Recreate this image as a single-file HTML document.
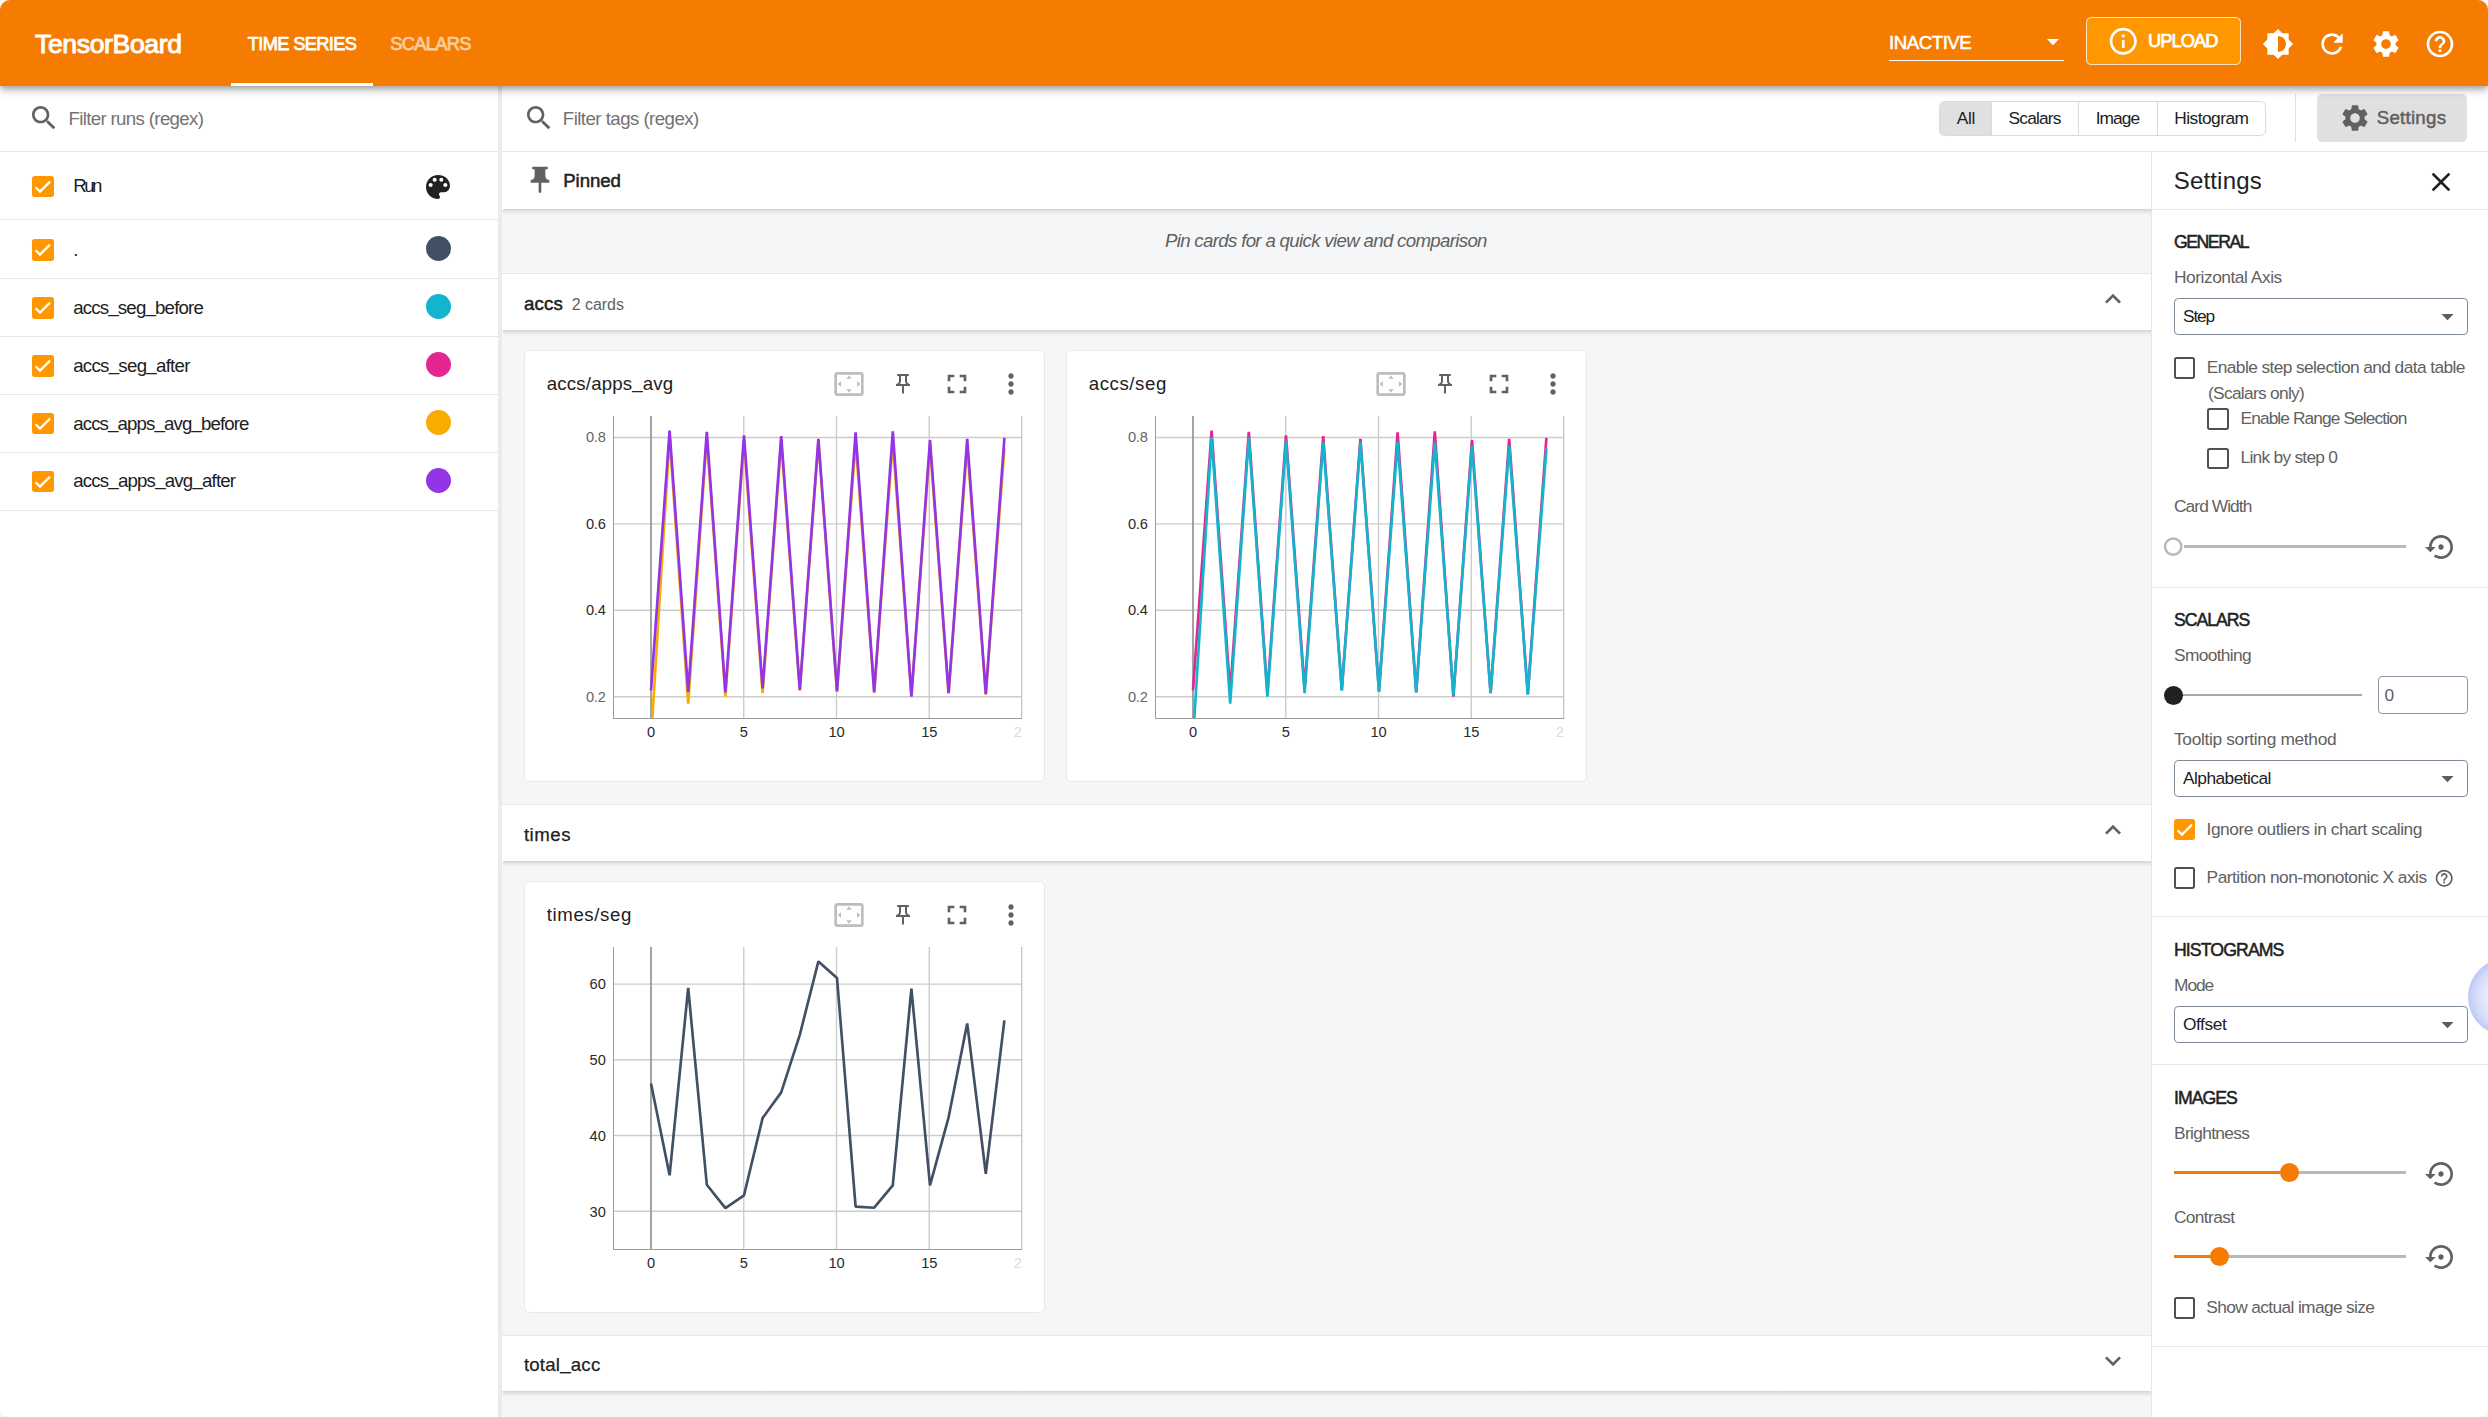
<!DOCTYPE html>
<html lang="en"><head><meta charset="utf-8"><title>TensorBoard</title>
<style>
html,body{margin:0;padding:0;}
body{width:2488px;height:1417px;overflow:hidden;background:#f6f6f7;font-family:"Liberation Sans",Arial,sans-serif;}
#app{position:absolute;left:0;top:0;width:2488px;height:1417px;border-radius:10px;overflow:hidden;background:#fff;}
#app div,#app header,#app aside,#app main,#app section,#app nav{position:absolute;}
.t{position:absolute;white-space:nowrap;line-height:1;display:block;}
.ic{position:absolute;display:block;}
.hline{background:#e4e6e9;height:1px;}
.us{position:relative;top:-2px;}
</style></head><body><div id="app">

<main style="left:502px;top:86px;width:1649px;height:1331px;background:#f5f6f7;">
</main>
<div class="gh" style="left:502.00px;top:152.00px;width:1649.00px;height:57.00px;background:#fff;box-sizing:border-box;"></div>
<div style="left:503.00px;top:209.00px;width:1648.00px;height:6.00px;background:linear-gradient(to bottom, rgba(0,0,0,0.15), rgba(0,0,0,0.06) 45%, rgba(0,0,0,0) 100%);"></div>
<svg class="ic" style="left:524.20px;top:164.10px;" width="32.00" height="32.00" viewBox="0 0 24 24"><path fill="#616161" d="M16 9V4h1c.55 0 1-.45 1-1s-.45-1-1-1H7c-.55 0-1 .45-1 1s.45 1 1 1h1v5c0 1.66-1.34 3-3 3v2h5.970v7l1 1 1-1v-7H19v-2c-1.660 0-3-1.340-3-3z"/></svg>
<span class="t" style="left:563.30px;top:172px;font-size:18.67px;color:#212121;letter-spacing:-0.120px;-webkit-text-stroke:0.5px;">Pinned</span>
<span class="t" style="left:1164.90px;top:232px;font-size:18.67px;color:#616161;letter-spacing:-0.671px;font-style:italic;">Pin cards for a quick view and comparison</span>
<div class="gh" style="left:502.00px;top:273.00px;width:1649.00px;height:57.00px;background:#fff;box-sizing:border-box;border-top:1px solid #e6e8eb;"></div>
<div style="left:503.00px;top:330.00px;width:1648.00px;height:6.00px;background:linear-gradient(to bottom, rgba(0,0,0,0.15), rgba(0,0,0,0.06) 45%, rgba(0,0,0,0) 100%);"></div>
<span class="t" style="left:523.90px;top:295px;font-size:18.67px;color:#212121;letter-spacing:0.209px;-webkit-text-stroke:0.5px;">accs</span>
<span class="t" style="left:571.70px;top:297px;font-size:16.00px;color:#616161;letter-spacing:-0.027px;">2 cards</span>
<svg class="ic" style="left:2097.30px;top:282.70px;" width="32.00" height="32.00" viewBox="0 0 24 24"><path fill="#616161" d="M12 8l-6 6 1.41 1.41L12 10.83l4.59 4.58L18 14z"/></svg>
<div class="gh" style="left:502.00px;top:804.30px;width:1649.00px;height:57.00px;background:#fff;box-sizing:border-box;border-top:1px solid #e6e8eb;"></div>
<div style="left:503.00px;top:861.30px;width:1648.00px;height:6.00px;background:linear-gradient(to bottom, rgba(0,0,0,0.15), rgba(0,0,0,0.06) 45%, rgba(0,0,0,0) 100%);"></div>
<span class="t" style="left:523.90px;top:826px;font-size:18.67px;color:#212121;letter-spacing:0.506px;-webkit-text-stroke:0.25px;">times</span>
<svg class="ic" style="left:2097.30px;top:814.00px;" width="32.00" height="32.00" viewBox="0 0 24 24"><path fill="#616161" d="M12 8l-6 6 1.41 1.41L12 10.83l4.59 4.58L18 14z"/></svg>
<div class="gh" style="left:502.00px;top:1335.00px;width:1649.00px;height:56.00px;background:#fff;box-sizing:border-box;border-top:1px solid #e6e8eb;"></div>
<div style="left:503.00px;top:1391.00px;width:1648.00px;height:6.00px;background:linear-gradient(to bottom, rgba(0,0,0,0.15), rgba(0,0,0,0.06) 45%, rgba(0,0,0,0) 100%);"></div>
<span class="t" style="left:523.90px;top:1356px;font-size:18.67px;color:#212121;letter-spacing:0.205px;-webkit-text-stroke:0.25px;">total<span class="us">_</span>acc</span>
<svg class="ic" style="left:2097.30px;top:1344.70px;" width="32.00" height="32.00" viewBox="0 0 24 24"><path fill="#616161" d="M16.59 8.59L12 13.17 7.41 8.59 6 10l6 6 6-6z"/></svg>
<div class="card" style="left:524.00px;top:350.00px;width:521.00px;height:432.00px;background:#fff;border:1px solid #e8e9eb;border-radius:5.3px;box-sizing:border-box;"></div>
<span class="t" style="left:546.80px;top:375px;font-size:18.67px;color:#212121;letter-spacing:0.161px;">accs/apps<span class="us">_</span>avg</span>
<svg class="ic" style="left:833.20px;top:368.40px;" width="32.00" height="32.00" viewBox="0 0 24 24"><path fill="#bdbdbd" d="M12.01 5.5L10 8h4l-1.990-2.500zM18 10v4l2.500-1.990L18 10zM6 10l-2.500 2.010L6 14v-4zm8 6h-4l2.010 2.500L14 16zm7-13H3c-1.100 0-2 .900-2 2v14c0 1.100.900 2 2 2h18c1.100 0 2-.900 2-2V5c0-1.100-.900-2-2-2zm0 16.010H3V4.990h18v14.020z"/></svg>
<svg class="ic" style="left:891.20px;top:372.40px;" width="24.00" height="24.00" viewBox="0 0 24 24"><path fill="#616161" d="M14 4v5c0 1.120.370 2.160 1 3H9c.650-.860 1-1.900 1-3V4h4m3-2H7c-.550 0-1 .450-1 1s.450 1 1 1h1v5c0 1.660-1.340 3-3 3v2h5.970v7l1 1 1-1v-7H19v-2c-1.660 0-3-1.340-3-3V4h1c.550 0 1-.450 1-1s-.450-1-1-1z"/></svg>
<svg class="ic" style="left:941.40px;top:368.40px;" width="32.00" height="32.00" viewBox="0 0 24 24"><path fill="#616161" d="M7 14H5v5h5v-2H7v-3zm-2-4h2V7h3V5H5v5zm12 7h-3v2h5v-5h-2v3zM14 5v2h3v3h2V5h-5z"/></svg>
<svg class="ic" style="left:995.20px;top:368.40px;" width="32.00" height="32.00" viewBox="0 0 24 24"><path fill="#616161" d="M12 8c1.1 0 2-.9 2-2s-.9-2-2-2-2 .9-2 2 .9 2 2 2zm0 2c-1.1 0-2 .9-2 2s.9 2 2 2 2-.9 2-2-.9-2-2-2zm0 6c-1.1 0-2 .9-2 2s.9 2 2 2 2-.9 2-2-.9-2-2-2z"/></svg>
<svg class="ic" style="left:524.00px;top:350.00px" width="521" height="431" viewBox="524.00 350.00 521 431"><line x1="743.76" x2="743.76" y1="416.00" y2="718.40" stroke="#cccccc" stroke-width="1.4"/><line x1="836.53" x2="836.53" y1="416.00" y2="718.40" stroke="#cccccc" stroke-width="1.4"/><line x1="929.30" x2="929.30" y1="416.00" y2="718.40" stroke="#cccccc" stroke-width="1.4"/><line x1="613.50" x2="1021.70" y1="437.50" y2="437.50" stroke="#cccccc" stroke-width="1.4"/><line x1="613.50" x2="1021.70" y1="523.90" y2="523.90" stroke="#cccccc" stroke-width="1.4"/><line x1="613.50" x2="1021.70" y1="610.30" y2="610.30" stroke="#cccccc" stroke-width="1.4"/><line x1="613.50" x2="1021.70" y1="696.70" y2="696.70" stroke="#cccccc" stroke-width="1.4"/><line x1="1021.70" x2="1021.70" y1="416.00" y2="718.40" stroke="#c4c4c4" stroke-width="1.3"/><line x1="651.00" x2="651.00" y1="416.00" y2="718.40" stroke="#999999" stroke-width="1.8"/><clipPath id="cp524_350"><rect x="613.50" y="416.00" width="408.20" height="302.40"/></clipPath><g clip-path="url(#cp524_350)" fill="none" stroke-width="2.67" stroke-linejoin="bevel"><polyline stroke="#f9ab00" points="651.00,739.90 669.60,437.50 688.20,703.61 706.80,437.50 725.40,696.70 744.00,440.96 762.60,693.24 781.20,441.82 799.80,690.65 818.40,441.82 837.00,691.95 855.60,441.82 874.20,692.38 892.80,441.82 911.40,694.97 930.00,446.14 948.60,693.24 967.20,446.14 985.80,694.54 1004.40,448.30"/><polyline stroke="#9334e6" points="651.00,690.39 669.60,430.59 688.20,691.95 706.80,431.88 725.40,692.38 744.00,435.34 762.60,688.49 781.20,436.20 799.80,689.79 818.40,438.80 837.00,691.08 855.60,432.32 874.20,692.38 892.80,431.45 911.40,696.70 930.00,440.09 948.60,693.24 967.20,438.80 985.80,694.11 1004.40,437.93"/></g><line x1="613.50" x2="613.50" y1="416.00" y2="719.00" stroke="#9c9c9c" stroke-width="1" shape-rendering="crispEdges"/><line x1="613.00" x2="1022.30" y1="718.50" y2="718.50" stroke="#9c9c9c" stroke-width="1" shape-rendering="crispEdges"/></svg>
<span class="t" style="left:646.90px;top:725px;font-size:14.67px;color:#2a2a2a;">0</span>
<span class="t" style="left:739.66px;top:725px;font-size:14.67px;color:#2a2a2a;">5</span>
<span class="t" style="left:828.38px;top:725px;font-size:14.67px;color:#2a2a2a;letter-spacing:-0.008px;">10</span>
<span class="t" style="left:921.15px;top:725px;font-size:14.67px;color:#2a2a2a;letter-spacing:-0.008px;">15</span>
<span class="t" style="left:1013.70px;top:725px;font-size:14.67px;color:#dcdcdc;">2</span>
<span class="t" style="left:585.90px;top:430px;font-size:14.67px;color:#666666;letter-spacing:-0.186px;">0.8</span>
<span class="t" style="left:585.90px;top:517px;font-size:14.67px;color:#2a2a2a;letter-spacing:-0.186px;">0.6</span>
<span class="t" style="left:585.90px;top:603px;font-size:14.67px;color:#2a2a2a;letter-spacing:-0.186px;">0.4</span>
<span class="t" style="left:585.90px;top:690px;font-size:14.67px;color:#666666;letter-spacing:-0.186px;">0.2</span>
<div class="card" style="left:1066.00px;top:350.00px;width:521.00px;height:432.00px;background:#fff;border:1px solid #e8e9eb;border-radius:5.3px;box-sizing:border-box;"></div>
<span class="t" style="left:1088.80px;top:375px;font-size:18.67px;color:#212121;letter-spacing:0.554px;">accs/seg</span>
<svg class="ic" style="left:1375.20px;top:368.40px;" width="32.00" height="32.00" viewBox="0 0 24 24"><path fill="#bdbdbd" d="M12.01 5.5L10 8h4l-1.990-2.500zM18 10v4l2.500-1.990L18 10zM6 10l-2.500 2.010L6 14v-4zm8 6h-4l2.010 2.500L14 16zm7-13H3c-1.100 0-2 .900-2 2v14c0 1.100.900 2 2 2h18c1.100 0 2-.900 2-2V5c0-1.100-.900-2-2-2zm0 16.010H3V4.990h18v14.020z"/></svg>
<svg class="ic" style="left:1433.20px;top:372.40px;" width="24.00" height="24.00" viewBox="0 0 24 24"><path fill="#616161" d="M14 4v5c0 1.120.370 2.160 1 3H9c.650-.860 1-1.900 1-3V4h4m3-2H7c-.550 0-1 .450-1 1s.450 1 1 1h1v5c0 1.660-1.340 3-3 3v2h5.970v7l1 1 1-1v-7H19v-2c-1.660 0-3-1.340-3-3V4h1c.550 0 1-.450 1-1s-.450-1-1-1z"/></svg>
<svg class="ic" style="left:1483.40px;top:368.40px;" width="32.00" height="32.00" viewBox="0 0 24 24"><path fill="#616161" d="M7 14H5v5h5v-2H7v-3zm-2-4h2V7h3V5H5v5zm12 7h-3v2h5v-5h-2v3zM14 5v2h3v3h2V5h-5z"/></svg>
<svg class="ic" style="left:1537.20px;top:368.40px;" width="32.00" height="32.00" viewBox="0 0 24 24"><path fill="#616161" d="M12 8c1.1 0 2-.9 2-2s-.9-2-2-2-2 .9-2 2 .9 2 2 2zm0 2c-1.1 0-2 .9-2 2s.9 2 2 2 2-.9 2-2-.9-2-2-2zm0 6c-1.1 0-2 .9-2 2s.9 2 2 2 2-.9 2-2-.9-2-2-2z"/></svg>
<svg class="ic" style="left:1066.00px;top:350.00px" width="521" height="431" viewBox="1066.00 350.00 521 431"><line x1="1285.77" x2="1285.77" y1="416.00" y2="718.40" stroke="#cccccc" stroke-width="1.4"/><line x1="1378.53" x2="1378.53" y1="416.00" y2="718.40" stroke="#cccccc" stroke-width="1.4"/><line x1="1471.30" x2="1471.30" y1="416.00" y2="718.40" stroke="#cccccc" stroke-width="1.4"/><line x1="1155.50" x2="1563.70" y1="437.50" y2="437.50" stroke="#cccccc" stroke-width="1.4"/><line x1="1155.50" x2="1563.70" y1="523.90" y2="523.90" stroke="#cccccc" stroke-width="1.4"/><line x1="1155.50" x2="1563.70" y1="610.30" y2="610.30" stroke="#cccccc" stroke-width="1.4"/><line x1="1155.50" x2="1563.70" y1="696.70" y2="696.70" stroke="#cccccc" stroke-width="1.4"/><line x1="1563.70" x2="1563.70" y1="416.00" y2="718.40" stroke="#c4c4c4" stroke-width="1.3"/><line x1="1193.00" x2="1193.00" y1="416.00" y2="718.40" stroke="#999999" stroke-width="1.8"/><clipPath id="cp1066_350"><rect x="1155.50" y="416.00" width="408.20" height="302.40"/></clipPath><g clip-path="url(#cp1066_350)" fill="none" stroke-width="2.67" stroke-linejoin="bevel"><polyline stroke="#e52592" points="1193.00,690.39 1211.60,430.59 1230.20,691.95 1248.80,431.88 1267.40,692.38 1286.00,435.34 1304.60,688.49 1323.20,436.20 1341.80,689.79 1360.40,438.80 1379.00,691.08 1397.60,432.32 1416.20,692.38 1434.80,431.45 1453.40,696.70 1472.00,440.09 1490.60,693.24 1509.20,438.80 1527.80,694.11 1546.40,437.93"/><polyline stroke="#12b5cb" points="1193.00,739.90 1211.60,437.50 1230.20,703.61 1248.80,437.50 1267.40,696.70 1286.00,440.96 1304.60,693.24 1323.20,441.82 1341.80,690.65 1360.40,441.82 1379.00,691.95 1397.60,441.82 1416.20,692.38 1434.80,441.82 1453.40,694.97 1472.00,446.14 1490.60,693.24 1509.20,446.14 1527.80,694.54 1546.40,448.30"/></g><line x1="1155.50" x2="1155.50" y1="416.00" y2="719.00" stroke="#9c9c9c" stroke-width="1" shape-rendering="crispEdges"/><line x1="1155.00" x2="1564.30" y1="718.50" y2="718.50" stroke="#9c9c9c" stroke-width="1" shape-rendering="crispEdges"/></svg>
<span class="t" style="left:1188.90px;top:725px;font-size:14.67px;color:#2a2a2a;">0</span>
<span class="t" style="left:1281.67px;top:725px;font-size:14.67px;color:#2a2a2a;">5</span>
<span class="t" style="left:1370.38px;top:725px;font-size:14.67px;color:#2a2a2a;letter-spacing:-0.008px;">10</span>
<span class="t" style="left:1463.14px;top:725px;font-size:14.67px;color:#2a2a2a;letter-spacing:-0.008px;">15</span>
<span class="t" style="left:1555.70px;top:725px;font-size:14.67px;color:#dcdcdc;">2</span>
<span class="t" style="left:1127.90px;top:430px;font-size:14.67px;color:#666666;letter-spacing:-0.186px;">0.8</span>
<span class="t" style="left:1127.90px;top:517px;font-size:14.67px;color:#2a2a2a;letter-spacing:-0.186px;">0.6</span>
<span class="t" style="left:1127.90px;top:603px;font-size:14.67px;color:#2a2a2a;letter-spacing:-0.186px;">0.4</span>
<span class="t" style="left:1127.90px;top:690px;font-size:14.67px;color:#666666;letter-spacing:-0.186px;">0.2</span>
<div class="card" style="left:524.00px;top:881.00px;width:521.00px;height:432.00px;background:#fff;border:1px solid #e8e9eb;border-radius:5.3px;box-sizing:border-box;"></div>
<span class="t" style="left:546.80px;top:906px;font-size:18.67px;color:#212121;letter-spacing:0.583px;">times/seg</span>
<svg class="ic" style="left:833.20px;top:899.40px;" width="32.00" height="32.00" viewBox="0 0 24 24"><path fill="#bdbdbd" d="M12.01 5.5L10 8h4l-1.990-2.500zM18 10v4l2.500-1.990L18 10zM6 10l-2.500 2.010L6 14v-4zm8 6h-4l2.010 2.500L14 16zm7-13H3c-1.100 0-2 .900-2 2v14c0 1.100.900 2 2 2h18c1.100 0 2-.900 2-2V5c0-1.100-.900-2-2-2zm0 16.010H3V4.990h18v14.020z"/></svg>
<svg class="ic" style="left:891.20px;top:903.40px;" width="24.00" height="24.00" viewBox="0 0 24 24"><path fill="#616161" d="M14 4v5c0 1.120.370 2.160 1 3H9c.650-.860 1-1.900 1-3V4h4m3-2H7c-.550 0-1 .450-1 1s.450 1 1 1h1v5c0 1.660-1.340 3-3 3v2h5.970v7l1 1 1-1v-7H19v-2c-1.660 0-3-1.340-3-3V4h1c.550 0 1-.450 1-1s-.450-1-1-1z"/></svg>
<svg class="ic" style="left:941.40px;top:899.40px;" width="32.00" height="32.00" viewBox="0 0 24 24"><path fill="#616161" d="M7 14H5v5h5v-2H7v-3zm-2-4h2V7h3V5H5v5zm12 7h-3v2h5v-5h-2v3zM14 5v2h3v3h2V5h-5z"/></svg>
<svg class="ic" style="left:995.20px;top:899.40px;" width="32.00" height="32.00" viewBox="0 0 24 24"><path fill="#616161" d="M12 8c1.1 0 2-.9 2-2s-.9-2-2-2-2 .9-2 2 .9 2 2 2zm0 2c-1.1 0-2 .9-2 2s.9 2 2 2 2-.9 2-2-.9-2-2-2zm0 6c-1.1 0-2 .9-2 2s.9 2 2 2 2-.9 2-2-.9-2-2-2z"/></svg>
<svg class="ic" style="left:524.00px;top:881.40px" width="521" height="431" viewBox="524.00 881.40 521 431"><line x1="743.76" x2="743.76" y1="947.40" y2="1249.80" stroke="#cccccc" stroke-width="1.4"/><line x1="836.53" x2="836.53" y1="947.40" y2="1249.80" stroke="#cccccc" stroke-width="1.4"/><line x1="929.30" x2="929.30" y1="947.40" y2="1249.80" stroke="#cccccc" stroke-width="1.4"/><line x1="613.50" x2="1021.70" y1="984.50" y2="984.50" stroke="#cccccc" stroke-width="1.4"/><line x1="613.50" x2="1021.70" y1="1060.20" y2="1060.20" stroke="#cccccc" stroke-width="1.4"/><line x1="613.50" x2="1021.70" y1="1135.90" y2="1135.90" stroke="#cccccc" stroke-width="1.4"/><line x1="613.50" x2="1021.70" y1="1211.60" y2="1211.60" stroke="#cccccc" stroke-width="1.4"/><line x1="1021.70" x2="1021.70" y1="947.40" y2="1249.80" stroke="#c4c4c4" stroke-width="1.3"/><line x1="651.00" x2="651.00" y1="947.40" y2="1249.80" stroke="#999999" stroke-width="1.8"/><clipPath id="cp524_881"><rect x="613.50" y="947.40" width="408.20" height="302.40"/></clipPath><g clip-path="url(#cp524_881)" fill="none" stroke-width="2.67" stroke-linejoin="bevel"><polyline stroke="#425066" points="651.00,1083.89 669.60,1175.72 688.20,988.28 706.80,1185.11 725.40,1208.57 744.00,1195.70 762.60,1118.49 781.20,1092.75 799.80,1035.22 818.40,961.79 837.00,978.44 855.60,1207.06 874.20,1208.12 892.80,1185.86 911.40,989.04 930.00,1185.86 948.60,1117.73 967.20,1023.86 985.80,1174.13 1004.40,1020.84"/></g><line x1="613.50" x2="613.50" y1="947.40" y2="1250.00" stroke="#9c9c9c" stroke-width="1" shape-rendering="crispEdges"/><line x1="613.00" x2="1022.30" y1="1249.50" y2="1249.50" stroke="#9c9c9c" stroke-width="1" shape-rendering="crispEdges"/></svg>
<span class="t" style="left:646.90px;top:1256px;font-size:14.67px;color:#2a2a2a;">0</span>
<span class="t" style="left:739.66px;top:1256px;font-size:14.67px;color:#2a2a2a;">5</span>
<span class="t" style="left:828.38px;top:1256px;font-size:14.67px;color:#2a2a2a;letter-spacing:-0.008px;">10</span>
<span class="t" style="left:921.15px;top:1256px;font-size:14.67px;color:#2a2a2a;letter-spacing:-0.008px;">15</span>
<span class="t" style="left:1013.70px;top:1256px;font-size:14.67px;color:#dcdcdc;">2</span>
<span class="t" style="left:589.60px;top:977px;font-size:14.67px;color:#2a2a2a;letter-spacing:-0.008px;">60</span>
<span class="t" style="left:589.60px;top:1053px;font-size:14.67px;color:#2a2a2a;letter-spacing:-0.008px;">50</span>
<span class="t" style="left:589.60px;top:1129px;font-size:14.67px;color:#2a2a2a;letter-spacing:-0.008px;">40</span>
<span class="t" style="left:589.60px;top:1205px;font-size:14.67px;color:#2a2a2a;letter-spacing:-0.008px;">30</span>
<div style="left:502.00px;top:86.00px;width:1986.00px;height:65.00px;background:#fff;border-bottom:1px solid #e4e6e9;"></div>
<svg class="ic" style="left:523.30px;top:101.70px;" width="32.00" height="32.00" viewBox="0 0 24 24"><path fill="#616161" d="M15.5 14h-.79l-.28-.27C15.41 12.59 16 11.11 16 9.5 16 5.91 13.09 3 9.5 3S3 5.91 3 9.5 5.91 16 9.5 16c1.61 0 3.09-.59 4.23-1.57l.27.28v.79l5 4.99L20.49 19l-4.99-5zm-6 0C7.01 14 5 11.99 5 9.5S7.01 5 9.5 5 14 7.01 14 9.5 11.99 14 9.5 14z"/></svg>
<span class="t" style="left:562.80px;top:110px;font-size:18.67px;color:#737373;letter-spacing:-0.539px;">Filter tags (regex)</span>
<div style="left:1939.00px;top:101.30px;width:327.00px;height:34.60px;border:1px solid #dadada;border-radius:5.3px;box-sizing:border-box;background:#fff;overflow:hidden;"><div style="left:0;top:0;width:51.2px;height:100%;background:#e0e0e0;"></div><div style="left:137.9px;top:0;width:1px;height:100%;background:#dadada;"></div><div style="left:216.9px;top:0;width:1px;height:100%;background:#dadada;"></div><div style="left:51.2px;top:0;width:1px;height:100%;background:#dadada;"></div></div>
<span class="t" style="left:1956.70px;top:110px;font-size:17.33px;color:#212121;letter-spacing:-0.330px;">All</span>
<span class="t" style="left:2008.50px;top:110px;font-size:17.33px;color:#212121;letter-spacing:-0.798px;">Scalars</span>
<span class="t" style="left:2095.70px;top:110px;font-size:17.33px;color:#212121;letter-spacing:-0.917px;">Image</span>
<span class="t" style="left:2174.20px;top:110px;font-size:17.33px;color:#212121;letter-spacing:-0.522px;">Histogram</span>
<div style="left:2295.00px;top:94.00px;width:1.00px;height:47.50px;background:#e0e0e0;"></div>
<div style="left:2317.20px;top:94.20px;width:149.80px;height:47.80px;background:#e0e0e0;border-radius:5.3px;"></div>
<svg class="ic" style="left:2339.20px;top:102.20px;" width="32.00" height="32.00" viewBox="0 0 24 24"><path fill="#616161" d="M19.14 12.94c.04-.3.06-.61.06-.94 0-.32-.02-.64-.07-.94l2.03-1.58c.18-.14.23-.41.12-.61l-1.92-3.32c-.12-.22-.37-.29-.59-.22l-2.39.96c-.5-.38-1.03-.7-1.62-.94l-.36-2.54c-.04-.24-.24-.41-.48-.41h-3.84c-.24 0-.43.17-.47.41l-.36 2.54c-.59.24-1.13.57-1.62.94l-2.39-.96c-.22-.08-.47 0-.59.22L2.74 8.87c-.12.21-.08.47.12.61l2.03 1.58c-.05.3-.09.63-.09.94s.02.64.07.94l-2.03 1.58c-.18.14-.23.41-.12.61l1.92 3.32c.12.22.37.29.59.22l2.39-.96c.5.38 1.03.7 1.62.94l.36 2.54c.05.24.24.41.48.41h3.84c.24 0 .44-.17.47-.41l.36-2.54c.59-.24 1.13-.56 1.62-.94l2.39.96c.22.08.47 0 .59-.22l1.92-3.32c.12-.22.07-.47-.12-.61l-2.01-1.58zM12 15.6c-1.98 0-3.6-1.62-3.6-3.6s1.62-3.6 3.6-3.6 3.6 1.62 3.6 3.6-1.62 3.6-3.6 3.6z"/></svg>
<span class="t" style="left:2376.70px;top:109px;font-size:18.67px;color:#616161;letter-spacing:0.269px;-webkit-text-stroke:0.5px;">Settings</span>
<div style="left:2151.00px;top:152.00px;width:337.00px;height:1265.00px;background:#fff;border-left:1px solid #e4e6e9;"></div>
<span class="t" style="left:2173.70px;top:169px;font-size:24.00px;color:#212121;letter-spacing:0.184px;">Settings</span>
<svg class="ic" style="left:2425.40px;top:165.70px;" width="32.00" height="32.00" viewBox="0 0 24 24"><path fill="#212121" d="M19 6.41L17.59 5 12 10.59 6.41 5 5 6.41 10.59 12 5 17.59 6.41 19 12 13.41 17.59 19 19 17.59 13.41 12z"/></svg>
<div class="hline" style="left:2152.00px;top:209.00px;width:336.00px;height:1.00px;"></div>
<span class="t" style="left:2174.00px;top:234px;font-size:17.70px;color:#212121;letter-spacing:-1.490px;-webkit-text-stroke:0.5px;">GENERAL</span>
<span class="t" style="left:2174.00px;top:269px;font-size:17.33px;color:#616161;letter-spacing:-0.458px;">Horizontal Axis</span>
<div style="left:2174.20px;top:298.00px;width:293.60px;height:37.00px;border:1.2px solid #7f8a99;border-radius:4.2px;box-sizing:border-box;background:#fff;"></div>
<span class="t" style="left:2183.00px;top:308px;font-size:17.33px;color:#212121;letter-spacing:-1.151px;">Step</span>
<svg class="ic" style="left:2432.70px;top:301.70px;" width="29.00" height="29.00" viewBox="0 0 24 24"><path fill="#5c5c5c" d="M7 10l5 5 5-5z"/></svg>
<div class="abs" style="left:2174.10px;top:357.20px;width:21.33px;height:21.33px;box-sizing:border-box;border:2px solid #505050;border-radius:2.7px;"></div>
<span class="t" style="left:2206.80px;top:359px;font-size:17.33px;color:#616161;letter-spacing:-0.594px;">Enable step selection and data table</span>
<span class="t" style="left:2208.00px;top:385px;font-size:17.33px;color:#616161;letter-spacing:-0.703px;">(Scalars only)</span>
<div class="abs" style="left:2207.30px;top:408.40px;width:21.33px;height:21.33px;box-sizing:border-box;border:2px solid #505050;border-radius:2.7px;"></div>
<span class="t" style="left:2240.50px;top:410px;font-size:17.33px;color:#616161;letter-spacing:-0.902px;">Enable Range Selection</span>
<div class="abs" style="left:2207.30px;top:448.00px;width:21.33px;height:21.33px;box-sizing:border-box;border:2px solid #505050;border-radius:2.7px;"></div>
<span class="t" style="left:2240.50px;top:449px;font-size:17.33px;color:#616161;letter-spacing:-0.724px;">Link by step 0</span>
<span class="t" style="left:2174.00px;top:498px;font-size:17.33px;color:#616161;letter-spacing:-0.929px;">Card Width</span>
<div style="left:2184.00px;top:545.00px;width:222.00px;height:3.00px;background:#b8b8b8;"></div>
<svg class="ic" style="left:2163px;top:536px" width="21" height="21" viewBox="2163 536 21 21"><circle cx="2173.2" cy="546.6" r="8.2" fill="#fff" stroke="#b8b8b8" stroke-width="2.5"/></svg>
<svg class="ic" style="left:2424.90px;top:531.00px;" width="32.00" height="32.00" viewBox="0 0 24 24"><path fill="#616161" d="M14 12c0-1.1-.9-2-2-2s-2 .9-2 2 .9 2 2 2 2-.9 2-2zm-2-9c-4.97 0-9 4.03-9 9H0l4 4 4-4H5c0-3.870 3.130-7 7-7s7 3.130 7 7-3.130 7-7 7c-1.510 0-2.910-.490-4.060-1.300l-1.420 1.440C8.040 20.300 9.940 21 12 21c4.970 0 9-4.030 9-9s-4.030-9-9-9z"/></svg>
<div class="hline" style="left:2152.00px;top:587.00px;width:336.00px;height:1.00px;"></div>
<span class="t" style="left:2174.00px;top:612px;font-size:17.70px;color:#212121;letter-spacing:-1.048px;-webkit-text-stroke:0.5px;">SCALARS</span>
<span class="t" style="left:2174.00px;top:647px;font-size:17.33px;color:#616161;letter-spacing:-0.643px;">Smoothing</span>
<div style="left:2180.00px;top:693.80px;width:182.00px;height:2.20px;background:#a8a8a8;"></div>
<div style="left:2163.90px;top:686.00px;width:19.00px;height:19.00px;border-radius:50%;background:#212121;"></div>
<div style="left:2378.00px;top:676.00px;width:90.00px;height:38.00px;border:1px solid #8a94a6;border-radius:4px;box-sizing:border-box;background:#fff;"></div>
<span class="t" style="left:2384.60px;top:687px;font-size:17.33px;color:#616161;">0</span>
<span class="t" style="left:2174.00px;top:731px;font-size:17.33px;color:#616161;letter-spacing:-0.330px;">Tooltip sorting method</span>
<div style="left:2174.20px;top:760.00px;width:293.60px;height:37.00px;border:1.2px solid #7f8a99;border-radius:4.2px;box-sizing:border-box;background:#fff;"></div>
<span class="t" style="left:2183.00px;top:770px;font-size:17.33px;color:#212121;letter-spacing:-0.547px;">Alphabetical</span>
<svg class="ic" style="left:2432.70px;top:763.70px;" width="29.00" height="29.00" viewBox="0 0 24 24"><path fill="#5c5c5c" d="M7 10l5 5 5-5z"/></svg>
<div class="abs" style="left:2174.00px;top:819.00px;width:21.33px;height:21.33px;background:#ff9800;border-radius:2.7px;"><svg viewBox="0 0 24 24" width="100%" height="100%"><path fill="none" stroke="#fff" stroke-width="2.5" d="M4.1 12.7 9 17.6 20.3 6.3"/></svg></div>
<span class="t" style="left:2206.60px;top:821px;font-size:17.33px;color:#616161;letter-spacing:-0.465px;">Ignore outliers in chart scaling</span>
<div class="abs" style="left:2174.10px;top:867.20px;width:21.33px;height:21.33px;box-sizing:border-box;border:2px solid #505050;border-radius:2.7px;"></div>
<span class="t" style="left:2206.60px;top:869px;font-size:17.33px;color:#616161;letter-spacing:-0.501px;">Partition non-monotonic X axis</span>
<svg class="ic" style="left:2433.90px;top:867.80px;" width="20.40" height="20.40" viewBox="0 0 24 24"><path fill="#616161" d="M11 18h2v-2h-2v2zm1-16C6.48 2 2 6.48 2 12s4.48 10 10 10 10-4.48 10-10S17.52 2 12 2zm0 18c-4.41 0-8-3.59-8-8s3.59-8 8-8 8 3.59 8 8-3.59 8-8 8zm0-14c-2.21 0-4 1.79-4 4h2c0-1.1.9-2 2-2s2 .9 2 2c0 2-3 1.75-3 5h2c0-2.25 3-2.5 3-5 0-2.21-1.79-4-4-4z"/></svg>
<div class="hline" style="left:2152.00px;top:916.00px;width:336.00px;height:1.00px;"></div>
<span class="t" style="left:2174.00px;top:942px;font-size:17.70px;color:#212121;letter-spacing:-0.911px;-webkit-text-stroke:0.5px;">HISTOGRAMS</span>
<span class="t" style="left:2174.00px;top:977px;font-size:17.33px;color:#616161;letter-spacing:-1.050px;">Mode</span>
<div style="left:2174.20px;top:1006.00px;width:293.60px;height:37.00px;border:1.2px solid #7f8a99;border-radius:4.2px;box-sizing:border-box;background:#fff;"></div>
<span class="t" style="left:2183.00px;top:1016px;font-size:17.33px;color:#212121;letter-spacing:-0.443px;">Offset</span>
<svg class="ic" style="left:2432.70px;top:1009.70px;" width="29.00" height="29.00" viewBox="0 0 24 24"><path fill="#5c5c5c" d="M7 10l5 5 5-5z"/></svg>
<div class="hline" style="left:2152.00px;top:1064.00px;width:336.00px;height:1.00px;"></div>
<div style="left:2468.00px;top:957.50px;width:78.00px;height:78.00px;border-radius:50%;background:radial-gradient(circle closest-side, #eef1fd 0%, #e6eafc 55%, #d5dcfa 80%, #bcc8f8 100%);"></div>
<span class="t" style="left:2174.00px;top:1090px;font-size:17.70px;color:#212121;letter-spacing:-0.984px;-webkit-text-stroke:0.5px;">IMAGES</span>
<span class="t" style="left:2174.00px;top:1125px;font-size:17.33px;color:#616161;letter-spacing:-0.665px;">Brightness</span>
<div style="left:2174.00px;top:1170.90px;width:232.00px;height:3.20px;background:#b8b8b8;"></div>
<div style="left:2174.00px;top:1170.90px;width:115.40px;height:3.20px;background:#f57c00;"></div>
<div style="left:2279.90px;top:1163.00px;width:19.00px;height:19.00px;border-radius:50%;background:#f57c00;"></div>
<svg class="ic" style="left:2424.90px;top:1158.20px;" width="32.00" height="32.00" viewBox="0 0 24 24"><path fill="#616161" d="M14 12c0-1.1-.9-2-2-2s-2 .9-2 2 .9 2 2 2 2-.9 2-2zm-2-9c-4.97 0-9 4.03-9 9H0l4 4 4-4H5c0-3.870 3.130-7 7-7s7 3.130 7 7-3.130 7-7 7c-1.510 0-2.910-.490-4.060-1.300l-1.420 1.440C8.040 20.300 9.940 21 12 21c4.970 0 9-4.030 9-9s-4.030-9-9-9z"/></svg>
<span class="t" style="left:2174.00px;top:1209px;font-size:17.33px;color:#616161;letter-spacing:-0.642px;">Contrast</span>
<div style="left:2174.00px;top:1254.90px;width:232.00px;height:3.20px;background:#b8b8b8;"></div>
<div style="left:2174.00px;top:1254.90px;width:45.70px;height:3.20px;background:#f57c00;"></div>
<div style="left:2210.20px;top:1247.00px;width:19.00px;height:19.00px;border-radius:50%;background:#f57c00;"></div>
<svg class="ic" style="left:2424.90px;top:1241.20px;" width="32.00" height="32.00" viewBox="0 0 24 24"><path fill="#616161" d="M14 12c0-1.1-.9-2-2-2s-2 .9-2 2 .9 2 2 2 2-.9 2-2zm-2-9c-4.97 0-9 4.03-9 9H0l4 4 4-4H5c0-3.870 3.130-7 7-7s7 3.130 7 7-3.130 7-7 7c-1.510 0-2.910-.490-4.060-1.300l-1.420 1.440C8.040 20.300 9.940 21 12 21c4.970 0 9-4.030 9-9s-4.030-9-9-9z"/></svg>
<div class="abs" style="left:2174.10px;top:1297.30px;width:21.33px;height:21.33px;box-sizing:border-box;border:2px solid #505050;border-radius:2.7px;"></div>
<span class="t" style="left:2206.30px;top:1299px;font-size:17.33px;color:#616161;letter-spacing:-0.635px;">Show actual image size</span>
<div class="hline" style="left:2152.00px;top:1346.00px;width:336.00px;height:1.00px;"></div>
<aside style="position:absolute;left:0;top:86px;width:498px;height:1331px;background:#fff;"></aside>
<div style="left:498.00px;top:86.00px;width:4.00px;height:1331.00px;background:#ebebeb;"></div>
<svg class="ic" style="left:28.00px;top:101.70px;" width="32.00" height="32.00" viewBox="0 0 24 24"><path fill="#616161" d="M15.5 14h-.79l-.28-.27C15.41 12.59 16 11.11 16 9.5 16 5.91 13.09 3 9.5 3S3 5.91 3 9.5 5.91 16 9.5 16c1.61 0 3.09-.59 4.23-1.57l.27.28v.79l5 4.99L20.49 19l-4.99-5zm-6 0C7.01 14 5 11.99 5 9.5S7.01 5 9.5 5 14 7.01 14 9.5 11.99 14 9.5 14z"/></svg>
<span class="t" style="left:68.40px;top:110px;font-size:18.67px;color:#737373;letter-spacing:-0.646px;">Filter runs (regex)</span>
<div class="hline" style="left:0.00px;top:151.00px;width:498.00px;height:1.00px;"></div>
<div class="abs" style="left:32.20px;top:175.80px;width:21.33px;height:21.33px;background:#ff9800;border-radius:2.7px;"><svg viewBox="0 0 24 24" width="100%" height="100%"><path fill="none" stroke="#fff" stroke-width="2.5" d="M4.1 12.7 9 17.6 20.3 6.3"/></svg></div>
<span class="t" style="left:73.20px;top:177px;font-size:18.67px;color:#212121;letter-spacing:-2.513px;">Run</span>
<svg class="ic" style="left:422.30px;top:171.00px;" width="32.00" height="32.00" viewBox="0 0 24 24"><path fill="#212121" d="M12 3c-4.97 0-9 4.03-9 9s4.03 9 9 9c.83 0 1.5-.67 1.5-1.5 0-.39-.15-.74-.39-1.01-.23-.26-.38-.61-.38-.99 0-.83.67-1.5 1.5-1.5H16c2.76 0 5-2.24 5-5 0-4.42-4.03-8-9-8zm-5.5 9c-.83 0-1.5-.67-1.5-1.5S5.670 9 6.500 9 8 9.670 8 10.500 7.330 12 6.500 12zm3-4C8.670 8 8 7.330 8 6.500S8.670 5 9.500 5s1.500.670 1.500 1.500S10.330 8 9.500 8zm5 0c-.83 0-1.5-.67-1.5-1.5S13.670 5 14.500 5s1.500.670 1.500 1.500S15.330 8 14.500 8zm3 4c-.83 0-1.5-.67-1.5-1.5S16.670 9 17.500 9s1.500.670 1.500 1.500-.67 1.500-1.500 1.500z"/></svg>
<div class="hline" style="left:0.00px;top:219.00px;width:498.00px;height:1.00px;"></div>
<div class="abs" style="left:32.20px;top:239.30px;width:21.33px;height:21.33px;background:#ff9800;border-radius:2.7px;"><svg viewBox="0 0 24 24" width="100%" height="100%"><path fill="none" stroke="#fff" stroke-width="2.5" d="M4.1 12.7 9 17.6 20.3 6.3"/></svg></div>
<span class="t" style="left:73.20px;top:241px;font-size:18.67px;color:#212121;">.</span>
<div style="left:425.90px;top:235.90px;width:25.00px;height:25.00px;border-radius:50%;background:#425066;"></div>
<div class="hline" style="left:0.00px;top:278.00px;width:498.00px;height:1.00px;"></div>
<div class="abs" style="left:32.20px;top:297.30px;width:21.33px;height:21.33px;background:#ff9800;border-radius:2.7px;"><svg viewBox="0 0 24 24" width="100%" height="100%"><path fill="none" stroke="#fff" stroke-width="2.5" d="M4.1 12.7 9 17.6 20.3 6.3"/></svg></div>
<span class="t" style="left:73.20px;top:299px;font-size:18.67px;color:#212121;letter-spacing:-0.821px;">accs<span class="us">_</span>seg<span class="us">_</span>before</span>
<div style="left:425.90px;top:293.90px;width:25.00px;height:25.00px;border-radius:50%;background:#12b5cb;"></div>
<div class="hline" style="left:0.00px;top:336.00px;width:498.00px;height:1.00px;"></div>
<div class="abs" style="left:32.20px;top:355.20px;width:21.33px;height:21.33px;background:#ff9800;border-radius:2.7px;"><svg viewBox="0 0 24 24" width="100%" height="100%"><path fill="none" stroke="#fff" stroke-width="2.5" d="M4.1 12.7 9 17.6 20.3 6.3"/></svg></div>
<span class="t" style="left:73.20px;top:357px;font-size:18.67px;color:#212121;letter-spacing:-0.718px;">accs<span class="us">_</span>seg<span class="us">_</span>after</span>
<div style="left:425.90px;top:351.80px;width:25.00px;height:25.00px;border-radius:50%;background:#e52592;"></div>
<div class="hline" style="left:0.00px;top:394.00px;width:498.00px;height:1.00px;"></div>
<div class="abs" style="left:32.20px;top:413.10px;width:21.33px;height:21.33px;background:#ff9800;border-radius:2.7px;"><svg viewBox="0 0 24 24" width="100%" height="100%"><path fill="none" stroke="#fff" stroke-width="2.5" d="M4.1 12.7 9 17.6 20.3 6.3"/></svg></div>
<span class="t" style="left:73.20px;top:415px;font-size:18.67px;color:#212121;letter-spacing:-0.880px;">accs<span class="us">_</span>apps<span class="us">_</span>avg<span class="us">_</span>before</span>
<div style="left:425.90px;top:409.70px;width:25.00px;height:25.00px;border-radius:50%;background:#f9ab00;"></div>
<div class="hline" style="left:0.00px;top:452.00px;width:498.00px;height:1.00px;"></div>
<div class="abs" style="left:32.20px;top:471.00px;width:21.33px;height:21.33px;background:#ff9800;border-radius:2.7px;"><svg viewBox="0 0 24 24" width="100%" height="100%"><path fill="none" stroke="#fff" stroke-width="2.5" d="M4.1 12.7 9 17.6 20.3 6.3"/></svg></div>
<span class="t" style="left:73.20px;top:472px;font-size:18.67px;color:#212121;letter-spacing:-0.808px;">accs<span class="us">_</span>apps<span class="us">_</span>avg<span class="us">_</span>after</span>
<div style="left:425.90px;top:467.60px;width:25.00px;height:25.00px;border-radius:50%;background:#9334e6;"></div>
<div class="hline" style="left:0.00px;top:510.00px;width:498.00px;height:1.00px;"></div>
<header style="left:0;top:0;width:2488px;height:86px;background:#f57c00;box-shadow:0 3px 5px -1px rgba(0,0,0,.2),0 5px 7px 0 rgba(0,0,0,.14),0 1px 13px 0 rgba(0,0,0,.12);"></header>
<span class="t" style="left:35.00px;top:31px;font-size:26.67px;color:#ffffff;letter-spacing:-0.414px;-webkit-text-stroke:0.95px;">TensorBoard</span>
<span class="t" style="left:247.80px;top:35px;font-size:18.30px;color:#ffffff;letter-spacing:-0.662px;-webkit-text-stroke:0.75px;">TIME SERIES</span>
<span class="t" style="left:390.20px;top:35px;font-size:18.30px;color:#fbcd9e;letter-spacing:-0.661px;-webkit-text-stroke:0.75px;">SCALARS</span>
<div style="left:231.00px;top:83.40px;width:142.00px;height:2.60px;background:#fff;"></div>
<span class="t" style="left:1889.00px;top:34px;font-size:18.67px;color:#ffffff;letter-spacing:-0.464px;-webkit-text-stroke:0.55px;">INACTIVE</span>
<div style="left:1889.00px;top:60.00px;width:174.60px;height:1.30px;background:#fff;"></div>
<svg class="ic" style="left:2047px;top:38.5px" width="12" height="6.4" viewBox="0 0 12 6.4"><path fill="#fff" d="M0 0h12L6 6.4z"/></svg>
<div style="left:2086.20px;top:17.40px;width:154.60px;height:47.20px;background:#ff9800;border:1.3px solid rgba(255,255,255,0.75);border-radius:5.3px;box-sizing:border-box;"></div>
<svg class="ic" style="left:2107.15px;top:25.05px;" width="32.50" height="32.50" viewBox="0 0 24 24"><path fill="#ffffff" d="M11 7h2v2h-2zm0 4h2v6h-2zm1-9C6.48 2 2 6.48 2 12s4.48 10 10 10 10-4.48 10-10S17.52 2 12 2zm0 18c-4.41 0-8-3.59-8-8s3.59-8 8-8 8 3.59 8 8-3.59 8-8 8z"/></svg>
<span class="t" style="left:2148.00px;top:32px;font-size:18.30px;color:#ffffff;letter-spacing:-0.936px;-webkit-text-stroke:0.75px;">UPLOAD</span>
<svg class="ic" style="left:2262.00px;top:28.00px;" width="32.00" height="32.00" viewBox="0 0 24 24"><path fill="#ffffff" d="M20 15.31L23.31 12 20 8.69V4h-4.69L12 .69 8.69 4H4v4.69L.69 12 4 15.31V20h4.69L12 23.31 15.31 20H20v-4.69zM12 18V6c3.31 0 6 2.69 6 6s-2.69 6-6 6z"/></svg>
<svg class="ic" style="left:2316.40px;top:28.00px;" width="32.00" height="32.00" viewBox="0 0 24 24"><path fill="#ffffff" d="M17.65 6.35C16.2 4.9 14.21 4 12 4c-4.42 0-7.99 3.58-7.99 8s3.57 8 7.99 8c3.73 0 6.84-2.55 7.73-6h-2.08c-.82 2.33-3.04 4-5.65 4-3.31 0-6-2.69-6-6s2.69-6 6-6c1.66 0 3.14.69 4.22 1.78L13 11h7V4l-2.35 2.35z"/></svg>
<svg class="ic" style="left:2370.00px;top:28.00px;" width="32.00" height="32.00" viewBox="0 0 24 24"><path fill="#ffffff" d="M19.14 12.94c.04-.3.06-.61.06-.94 0-.32-.02-.64-.07-.94l2.03-1.58c.18-.14.23-.41.12-.61l-1.92-3.32c-.12-.22-.37-.29-.59-.22l-2.39.96c-.5-.38-1.03-.7-1.62-.94l-.36-2.54c-.04-.24-.24-.41-.48-.41h-3.84c-.24 0-.43.17-.47.41l-.36 2.54c-.59.24-1.13.57-1.62.94l-2.39-.96c-.22-.08-.47 0-.59.22L2.74 8.87c-.12.21-.08.47.12.61l2.03 1.58c-.05.3-.09.63-.09.94s.02.64.07.94l-2.03 1.58c-.18.14-.23.41-.12.61l1.92 3.32c.12.22.37.29.59.22l2.39-.96c.5.38 1.03.7 1.62.94l.36 2.54c.05.24.24.41.48.41h3.84c.24 0 .44-.17.47-.41l.36-2.54c.59-.24 1.13-.56 1.62-.94l2.39.96c.22.08.47 0 .59-.22l1.92-3.32c.12-.22.07-.47-.12-.61l-2.01-1.58zM12 15.6c-1.98 0-3.6-1.62-3.6-3.6s1.62-3.6 3.6-3.6 3.6 1.62 3.6 3.6-1.62 3.6-3.6 3.6z"/></svg>
<svg class="ic" style="left:2424.20px;top:28.00px;" width="32.00" height="32.00" viewBox="0 0 24 24"><path fill="#ffffff" d="M11 18h2v-2h-2v2zm1-16C6.48 2 2 6.48 2 12s4.48 10 10 10 10-4.48 10-10S17.52 2 12 2zm0 18c-4.41 0-8-3.59-8-8s3.59-8 8-8 8 3.59 8 8-3.59 8-8 8zm0-14c-2.21 0-4 1.79-4 4h2c0-1.1.9-2 2-2s2 .9 2 2c0 2-3 1.75-3 5h2c0-2.25 3-2.5 3-5 0-2.21-1.79-4-4-4z"/></svg>
</div></body></html>
